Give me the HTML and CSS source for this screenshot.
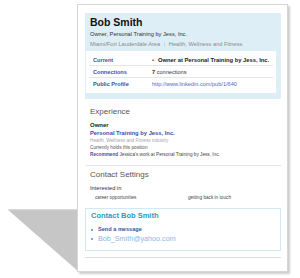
FILE: index.html
```html
<!DOCTYPE html>
<html lang="en">
<head>
    <meta charset="UTF-8">
    <title>Bob Smith - Profile</title>
    <link rel="stylesheet" href="styles.css">
</head>
<body>
    <div class="stage">
        <div class="drop-shadow"></div>
        <div class="page">
            <div class="profile-head">
                <h1 class="name">Bob Smith</h1>
                <div class="headline">Owner, Personal Training by Jess, Inc.</div>
                <div class="location">Miami/Fort Lauderdale Area <span class="pipe">|</span> Health, Wellness and Fitness</div>
                <div class="overview">
                    <div class="row">
                        <div class="label">Current</div>
                        <div class="value strong"><span class="dot">&bull;</span>Owner at Personal Training by Jess, Inc.</div>
                    </div>
                    <div class="row">
                        <div class="label">Connections</div>
                        <div class="value"><b>7</b> connections</div>
                    </div>
                    <div class="row last">
                        <div class="label">Public Profile</div>
                        <div class="value link">http://www.linkedin.com/pub/1/640</div>
                    </div>
                </div>
            </div>

            <div class="section experience">
                <h2>Experience</h2>
                <div class="title">Owner</div>
                <div class="company">Personal Training by Jess, Inc.</div>
                <div class="industry">Health, Wellness and Fitness industry</div>
                <div class="period">Currently holds this position</div>
                <div class="recommend"><span class="rec-link">Recommend</span> Jessica's work at Personal Training by Jess, Inc.</div>
            </div>

            <div class="section contact">
                <h2>Contact Settings</h2>
                <div class="interest-title">Interested in</div>
                <div class="interests">
                    <span>career opportunities</span>
                    <span>getting back in touch</span>
                </div>
                <div class="contact-box">
                    <h3>Contact Bob Smith</h3>
                    <ul>
                        <li class="msg">Send a message</li>
                        <li class="mail">Bob_Smith@yahoo.com</li>
                    </ul>
                </div>
                <div class="foot">- &middot; &middot; &middot; &middot; &middot;</div>
            </div>
        </div>
    </div>
</body>
</html>
```

FILE: styles.css
```css
body {
    margin: 0;
    background: #fff;
    font-family: 'Liberation Sans', Arial, sans-serif;
    color: #333;
}

.stage {
    position: relative;
    width: 300px;
    height: 278px;
    padding: 4px 0 0 77px;
    box-sizing: border-box;
}

.drop-shadow {
    position: absolute;
    left: 7px;
    top: 209px;
    width: 72px;
    height: 63px;
    background: #c6c6c6;
    clip-path: polygon(0 0, 100% 0, 100% 100%);
    filter: blur(1.2px);
}

.page {
    position: relative;
    width: 211px;
    height: 268px;
    box-sizing: border-box;
    padding: 8px 6px 0 8px;
    background: #fff;
    border: 1px solid #d6d6d6;
    box-shadow: 2px 2px 2px rgba(0, 0, 0, 0.2);
}

/* header */
.profile-head {
    background: #ddeef7;
    padding: 2px 5px 6px 1px;
    margin-left: -1px;
}

.name {
    margin: 0 0 0 4px;
    font-size: 10.5px;
    line-height: 14px;
    font-weight: bold;
    color: #111;
}

.headline,
.location {
    margin-left: 4px;
    font-size: 5.7px;
    line-height: 10px;
    white-space: nowrap;
}

.headline {
    color: #333;
}

.location {
    color: #8a8a8a;
}

.pipe {
    margin: 0 2px;
    color: #bbb;
}

.overview {
    margin-top: 2px;
    background: #fff;
    padding: 3px 0;
}

.row {
    display: flex;
    height: 12px;
    align-items: center;
    border-bottom: 1px solid #e6e6e6;
    box-sizing: border-box;
    margin: 0 3px;
    font-size: 5.6px;
    white-space: nowrap;
}

.row.last {
    border-bottom: none;
}

.label {
    width: 59px;
    padding-left: 4px;
    font-weight: bold;
    color: #3a52a6;
}

.value {
    color: #333;
}

.value.strong {
    font-size: 5.8px;
    font-weight: bold;
    color: #222;
}

.dot {
    margin-right: 4px;
    color: #555;
}

.value.link {
    color: #4e6bbd;
}

/* sections */
.section {
    padding-left: 4px;
}

.section h2 {
    margin: 0;
    font-size: 8px;
    line-height: 12px;
    font-weight: normal;
    color: #555;
}

.experience {
    margin-top: 7px;
    padding-bottom: 6px;
    border-bottom: 1px solid #e4e4e4;
}

.experience .title {
    margin-top: 3px;
    font-size: 6px;
    line-height: 8px;
    font-weight: bold;
    color: #222;
}

.company {
    font-size: 5.8px;
    line-height: 8px;
    font-weight: bold;
    color: #3a52a6;
    white-space: nowrap;
}

.industry,
.period,
.recommend {
    font-size: 4.7px;
    line-height: 7px;
    white-space: nowrap;
}

.industry {
    color: #a5a5a5;
}

.period {
    color: #555;
}

.recommend {
    line-height: 8px;
    color: #444;
}

.rec-link {
    font-weight: bold;
    color: #3a52a6;
}

.contact {
    margin-top: 3px;
}

.interest-title {
    margin-top: 3px;
    font-size: 5.7px;
    line-height: 8px;
    color: #333;
}

.interests {
    display: flex;
    margin-top: 2px;
    padding-left: 5px;
    font-size: 4.7px;
    line-height: 8px;
    color: #444;
}

.interests span:first-child {
    width: 93px;
}

.contact-box {
    margin: 6px 0 0 -5px;
    padding: 2px 0 7px 5px;
    border: 1px solid #d3e8f2;
}

.contact-box h3 {
    margin: 0;
    font-size: 7.5px;
    line-height: 10px;
    font-weight: bold;
    color: #22a0b4;
}

.contact-box ul {
    margin: 4px 0 0;
    padding: 0;
    list-style: none;
}

.contact-box li {
    position: relative;
    padding-left: 7px;
    line-height: 9px;
}

.contact-box li::before {
    content: '';
    position: absolute;
    left: 0;
    top: 4px;
    width: 2px;
    height: 2px;
    border-radius: 50%;
    background: #3b9bd0;
}

.msg {
    font-size: 5.6px;
    font-weight: bold;
    color: #3a52a6;
}

.mail {
    font-size: 7.2px;
    color: #8fb6e0;
}

.foot {
    margin: 6px 0 0 -5px;
    padding-left: 5px;
    border-top: 1px solid #dcdcdc;
    font-size: 4px;
    line-height: 8px;
    color: #d8d8d8;
}
```
